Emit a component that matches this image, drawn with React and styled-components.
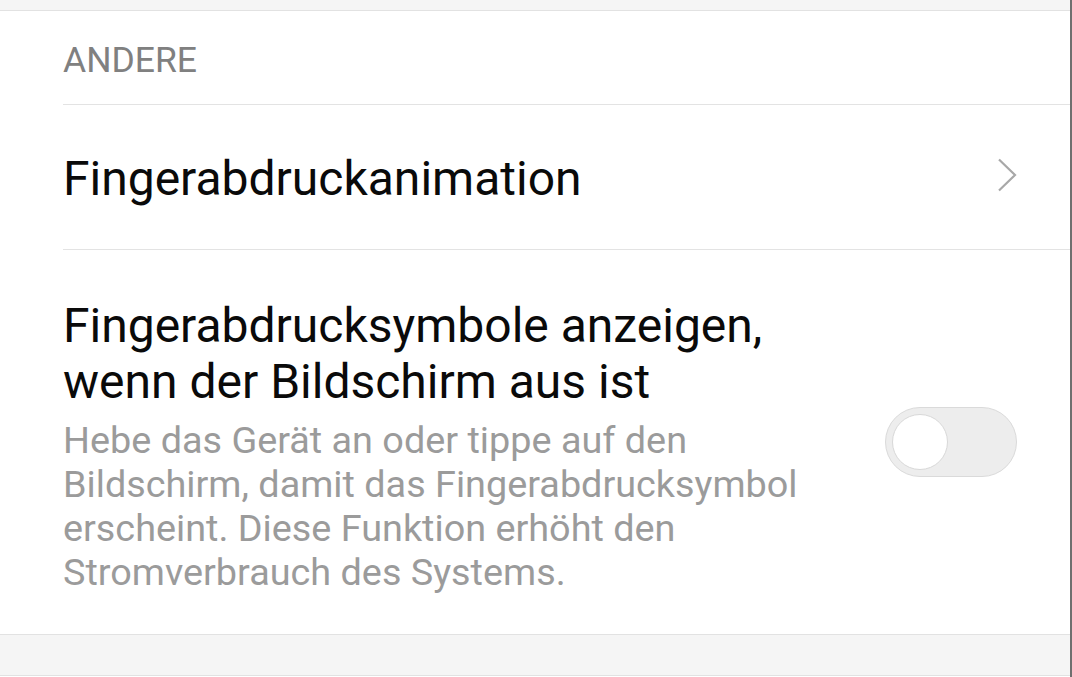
import styled, { createGlobalStyle } from 'styled-components'

const Global = createGlobalStyle`
    html, body {
        margin: 0;
        padding: 0;
        background: #fff;
    }
    * {
        box-sizing: border-box;
    }
`

export default function App() {
    return (
        <Page>
            <Global />
            <Band />
            <Section>
                <SectionTitle>ANDERE</SectionTitle>
                <Item height={145}>
                    <ItemText>
                        <Title>Fingerabdruckanimation</Title>
                    </ItemText>
                    <Chevron viewBox="0 0 20 34">
                        <path d="M2 1.5 L18 17 L2 32.5" />
                    </Chevron>
                </Item>
                <Item padded>
                    <ItemText>
                        <Title>Fingerabdrucksymbole anzeigen, wenn der Bildschirm aus ist</Title>
                        <Summary>
                            Hebe das Gerät an oder tippe auf den Bildschirm, damit das Fingerabdrucksymbol
                            erscheint. Diese Funktion erhöht den Stromverbrauch des Systems.
                        </Summary>
                    </ItemText>
                    <Switch>
                        <Knob />
                    </Switch>
                </Item>
            </Section>
            <Band bottom />
        </Page>
    )
}

const Page = styled.div`
    width: 100%;
    height: 677px;
    overflow: hidden;
    display: flex;
    flex-direction: column;
    background: #fff;
    border-right: 2px solid #6f6f6f;
    font-family: Roboto, "Liberation Sans", sans-serif;
`

const Band = styled.div`
    flex: none;
    height: ${p => p.bottom ? '42px' : '11px'};
    background: #f5f5f5;
    border-top: ${p => p.bottom ? '1px solid #e2e2e2' : 'none'};
    border-bottom: 1px solid #e2e2e2;
`

const Section = styled.section`
    flex: none;
    display: flex;
    flex-direction: column;
    padding-left: 63px;
`

const SectionTitle = styled.div`
    height: 93px;
    display: flex;
    align-items: center;
    padding-top: 5px;
    font-size: 35.5px;
    color: #808080;
`

const Item = styled.div`
    display: flex;
    align-items: center;
    gap: 66px;
    border-top: 1px solid #e3e3e3;
    padding-right: 53px;
    height: ${p => p.height ? `${p.height}px` : 'auto'};
    padding-top: ${p => p.padded ? '48px' : '4px'};
    padding-bottom: ${p => p.padded ? '40px' : '0'};
`

const ItemText = styled.div`
    flex: 1;
    display: flex;
    flex-direction: column;
`

const Title = styled.div`
    font-size: 48px;
    line-height: 56px;
    color: #0a0a0a;
`

const Summary = styled.div`
    font-size: 37.8px;
    line-height: 44px;
    color: #9b9b9b;
    margin-top: 8px;
`

const Chevron = styled.svg`
    width: 20px;
    height: 34px;
    flex: none;
    margin-bottom: 8px;
    fill: none;
    stroke: #a8a8a8;
    stroke-width: 2.2;
`

const Switch = styled.div`
    flex: none;
    width: 132px;
    height: 70px;
    margin-bottom: 8px;
    border-radius: 35px;
    background: #ededed;
    border: 1.5px solid #dadada;
    display: flex;
    align-items: center;
    padding-left: 6px;
`

const Knob = styled.div`
    width: 56px;
    height: 56px;
    border-radius: 50%;
    background: #fff;
    border: 1.5px solid #d8d8d8;
`
